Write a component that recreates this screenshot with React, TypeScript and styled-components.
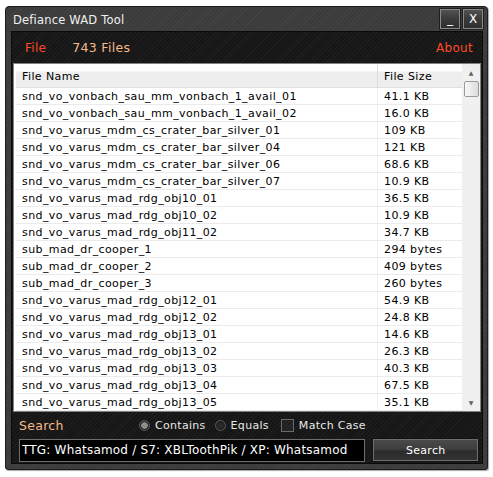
import styled, { createGlobalStyle } from "styled-components";

const GlobalStyle = createGlobalStyle`
  html, body {
    margin: 0;
    padding: 0;
    background: #ffffff;
  }
  body {
    font-family: "DejaVu Sans", Verdana, sans-serif;
    font-size: 11px;
  }
`;

const files: [string, string][] = [
  ["snd_vo_vonbach_sau_mm_vonbach_1_avail_01", "41.1 KB"],
  ["snd_vo_vonbach_sau_mm_vonbach_1_avail_02", "16.0 KB"],
  ["snd_vo_varus_mdm_cs_crater_bar_silver_01", "109 KB"],
  ["snd_vo_varus_mdm_cs_crater_bar_silver_04", "121 KB"],
  ["snd_vo_varus_mdm_cs_crater_bar_silver_06", "68.6 KB"],
  ["snd_vo_varus_mdm_cs_crater_bar_silver_07", "10.9 KB"],
  ["snd_vo_varus_mad_rdg_obj10_01", "36.5 KB"],
  ["snd_vo_varus_mad_rdg_obj10_02", "10.9 KB"],
  ["snd_vo_varus_mad_rdg_obj11_02", "34.7 KB"],
  ["sub_mad_dr_cooper_1", "294 bytes"],
  ["sub_mad_dr_cooper_2", "409 bytes"],
  ["sub_mad_dr_cooper_3", "260 bytes"],
  ["snd_vo_varus_mad_rdg_obj12_01", "54.9 KB"],
  ["snd_vo_varus_mad_rdg_obj12_02", "24.8 KB"],
  ["snd_vo_varus_mad_rdg_obj13_01", "14.6 KB"],
  ["snd_vo_varus_mad_rdg_obj13_02", "26.3 KB"],
  ["snd_vo_varus_mad_rdg_obj13_03", "40.3 KB"],
  ["snd_vo_varus_mad_rdg_obj13_04", "67.5 KB"],
  ["snd_vo_varus_mad_rdg_obj13_05", "35.1 KB"],
];

const stripes = `repeating-linear-gradient(
    135deg,
    rgba(255, 255, 255, 0.035) 0px,
    rgba(255, 255, 255, 0.035) 1px,
    transparent 1px,
    transparent 3px
  )`;

export default function App() {
  return (
    <>
      <GlobalStyle />
      <Page>
        <Window>
          <TitleBar>
            <Title>Defiance WAD Tool</Title>
            <TitleButtons>
              <TitleButton>_</TitleButton>
              <TitleButton>X</TitleButton>
            </TitleButtons>
          </TitleBar>
          <Body>
            <MenuBar>
              <MenuLink>File</MenuLink>
              <FileCount>743 Files</FileCount>
              <Spacer />
              <MenuLink>About</MenuLink>
            </MenuBar>
            <ListBox>
              <Table>
                <HeaderRow>
                  <NameCell>File Name</NameCell>
                  <SizeCell>File Size</SizeCell>
                </HeaderRow>
                {files.map(([name, size]) => (
                  <Row key={name}>
                    <NameCell>{name}</NameCell>
                    <SizeCell>{size}</SizeCell>
                  </Row>
                ))}
              </Table>
              <ScrollBar>
                <Arrow>▲</Arrow>
                <Thumb />
                <Track />
                <Arrow>▼</Arrow>
              </ScrollBar>
            </ListBox>
            <OptionsRow>
              <SearchLabel>Search</SearchLabel>
              <Options>
                <Option>
                  <Radio $checked />
                  Contains
                </Option>
                <Option>
                  <Radio />
                  Equals
                </Option>
                <Option>
                  <Check />
                  Match Case
                </Option>
              </Options>
            </OptionsRow>
            <SearchRow>
              <SearchInput
                defaultValue="TTG: Whatsamod / S7: XBLToothPik / XP: Whatsamod"
              />
              <SearchButton>Search</SearchButton>
            </SearchRow>
          </Body>
        </Window>
      </Page>
    </>
  );
}

const Page = styled.div`
  width: 493px;
  height: 477px;
  padding: 6px 0 0 5px;
  box-sizing: border-box;
`;

const Window = styled.div`
  width: 483px;
  height: 464px;
  box-sizing: border-box;
  background-color: #3b3b3b;
  background-image: ${stripes};
  border: 1px solid #1c1c1c;
  border-radius: 4px 4px 3px 3px;
  box-shadow: 1px 1px 1px rgba(0, 0, 0, 0.35);
  display: flex;
  flex-direction: column;
  padding: 0 4px 5px 5px;
`;

const TitleBar = styled.div`
  height: 24px;
  display: flex;
  align-items: center;
  justify-content: space-between;
`;

const Title = styled.div`
  color: #f0f0f0;
  font-size: 11.5px;
  letter-spacing: 0.2px;
  padding-left: 2px;
  padding-top: 2px;
`;

const TitleButtons = styled.div`
  display: flex;
  gap: 3px;
  align-self: flex-start;
  margin-top: 2px;
`;

const TitleButton = styled.div`
  width: 20px;
  height: 20px;
  box-sizing: border-box;
  border: 1px solid #8a8a8a;
  outline: 1px solid #1e1e1e;
  background: linear-gradient(#525252, #3a3a3a 50%, #2f2f2f);
  color: #ffffff;
  font-size: 12px;
  display: flex;
  align-items: center;
  justify-content: center;
  line-height: 1;
`;

const Body = styled.div`
  flex: 1;
  background-color: #161616;
  background-image: ${stripes};
  border: 1px solid #0a0a0a;
  display: flex;
  flex-direction: column;
  padding: 0 1px;
`;

const MenuBar = styled.div`
  height: 31px;
  display: flex;
  align-items: center;
  padding: 0 8px 0 12px;
  font-size: 12px;
  letter-spacing: 0.3px;
`;

const MenuLink = styled.span`
  color: #ff4a26;
`;

const FileCount = styled.span`
  color: #f5b98a;
  margin-left: 26px;
  font-size: 12.5px;
`;

const Spacer = styled.div`
  flex: 1;
`;

const ListBox = styled.div`
  height: 347px;
  background: #ffffff;
  border: 1px solid #808080;
  display: flex;
  overflow: hidden;
`;

const Table = styled.div`
  flex: 1;
  display: flex;
  flex-direction: column;
  padding-left: 2px;
  letter-spacing: 0.4px;
`;

const Row = styled.div`
  height: 17px;
  flex: none;
  display: grid;
  grid-template-columns: 361px 1fr;
  border-bottom: 1px solid #ebebeb;
  box-sizing: border-box;
  color: #000000;
`;

const HeaderRow = styled(Row)`
  height: 24px;
  padding-top: 1px;
  background: linear-gradient(#ffffff 0%, #ffffff 30%, #eeeeee 35%, #eeeeee 100%);
  border-bottom: 1px solid #e0e0e0;
  > div + div {
    border-left: 1px solid #dcdcdc;
  }
`;

const NameCell = styled.div`
  display: flex;
  align-items: center;
  padding-left: 6px;
  white-space: nowrap;
  overflow: hidden;
`;

const SizeCell = styled.div`
  display: flex;
  align-items: center;
  padding-left: 6px;
  white-space: nowrap;
  border-left: 1px solid #f0f0f0;
`;

const ScrollBar = styled.div`
  width: 18px;
  background: #f0f0f0;
  display: flex;
  flex-direction: column;
  align-items: center;
`;

const Arrow = styled.div`
  height: 17px;
  font-size: 6px;
  color: #606060;
  display: flex;
  align-items: center;
  justify-content: center;
`;

const Thumb = styled.div`
  width: 15px;
  height: 16px;
  box-sizing: border-box;
  border: 1px solid #9a9a9a;
  border-radius: 2px;
  background: linear-gradient(90deg, #f8f8f8, #dcdcdc);
`;

const Track = styled.div`
  flex: 1;
`;

const OptionsRow = styled.div`
  height: 26px;
  display: flex;
  align-items: center;
  padding-left: 6px;
  letter-spacing: 0.3px;
`;

const SearchLabel = styled.span`
  color: #f5b98a;
  font-size: 12.5px;
  width: 120px;
`;

const Options = styled.div`
  display: flex;
  align-items: center;
  gap: 9px;
  color: #e8e8e8;
`;

const Option = styled.label`
  display: flex;
  align-items: center;
  gap: 5px;
`;

const Radio = styled.span<{ $checked?: boolean }>`
  width: 11px;
  height: 11px;
  border-radius: 50%;
  box-sizing: border-box;
  border: 1px solid #5a5a5a;
  background: ${(p) =>
    p.$checked
      ? "radial-gradient(circle, #8c8c8c 0 3px, #2a2a2a 3.5px)"
      : "radial-gradient(circle, #2e2e2e, #1a1a1a)"};
`;

const Check = styled.span`
  width: 13px;
  height: 13px;
  box-sizing: border-box;
  border: 1px solid #6a6a6a;
  background-color: #202020;
  background-image: ${stripes};
  margin-left: 3px;
`;

const SearchRow = styled.div`
  display: flex;
  align-items: center;
  gap: 8px;
  padding: 0 3px 0 6px;
  height: 24px;
`;

const SearchInput = styled.input`
  width: 348px;
  height: 23px;
  box-sizing: border-box;
  background: #000000;
  border: 1px solid #6e6e6e;
  color: #ffffff;
  font-family: "DejaVu Sans", Verdana, sans-serif;
  font-size: 12px;
  letter-spacing: 0.2px;
  padding: 0 2px;
  outline: none;
`;

const SearchButton = styled.button`
  width: 105px;
  height: 22px;
  box-sizing: border-box;
  border: 1px solid #6e6e6e;
  outline: 1px solid #141414;
  background: linear-gradient(#4a4a4a, #3e3e3e 45%, #2c2c2c 55%, #323232);
  color: #ffffff;
  font-family: "DejaVu Sans", Verdana, sans-serif;
  font-size: 11px;
  letter-spacing: 0.3px;
  padding: 0;
`;
